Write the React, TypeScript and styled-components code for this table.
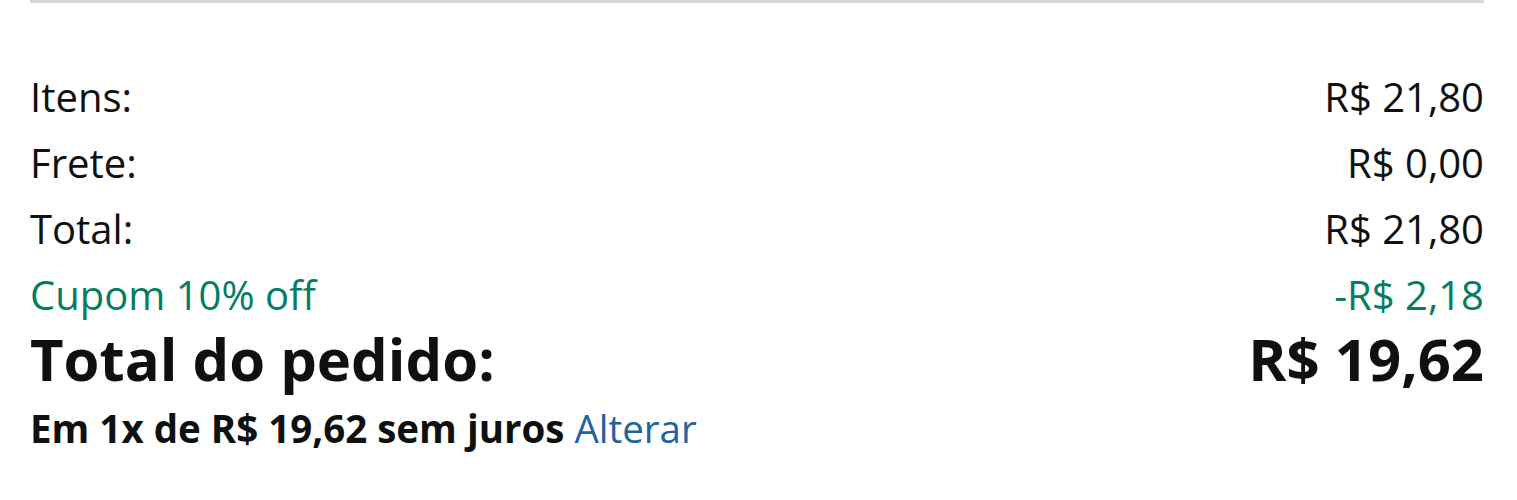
import React from 'react';
import styled, { createGlobalStyle } from 'styled-components';

const GlobalStyle = createGlobalStyle`
  * {
    box-sizing: border-box;
  }

  body {
    margin: 0;
    background: #ffffff;
    font-family: 'Open Sans', 'Noto Sans', sans-serif;
    color: #0f1111;
  }
`;

const Summary = styled.section`
  margin: 0 33px 0 30px;
  border-top: 3px solid #d5d9d9;
  padding-top: 61px;
`;

const Row = styled.div<{ $tone?: 'green' }>`
  display: flex;
  justify-content: space-between;
  align-items: baseline;
  font-size: 40px;
  line-height: 66px;
  color: ${(p) => (p.$tone === 'green' ? '#067d62' : '#0f1111')};
`;

const TotalRow = styled(Row)`
  font-size: 58px;
  font-weight: 700;
  line-height: 62px;
  color: #0f1111;
`;

const Installments = styled.p`
  margin: 14px 0 0;
  font-size: 38.5px;
  font-weight: 700;
  line-height: 48px;
`;

const Link = styled.a`
  font-weight: 400;
  color: #2162a1;
  text-decoration: none;
`;

const lines = [
  { label: 'Itens:', value: 'R$ 21,80' },
  { label: 'Frete:', value: 'R$ 0,00' },
  { label: 'Total:', value: 'R$ 21,80' },
];

const App: React.FC = () => {
  return (
    <>
      <GlobalStyle />
      <Summary>
        {lines.map((l) => (
          <Row key={l.label}>
            <span>{l.label}</span>
            <span>{l.value}</span>
          </Row>
        ))}
        <Row $tone="green">
          <span>Cupom 10% off</span>
          <span>-R$ 2,18</span>
        </Row>
        <TotalRow>
          <span>Total do pedido:</span>
          <span>R$ 19,62</span>
        </TotalRow>
        <Installments>
          Em 1x de R$ 19,62 sem juros <Link href="#">Alterar</Link>
        </Installments>
      </Summary>
    </>
  );
};

export default App;
